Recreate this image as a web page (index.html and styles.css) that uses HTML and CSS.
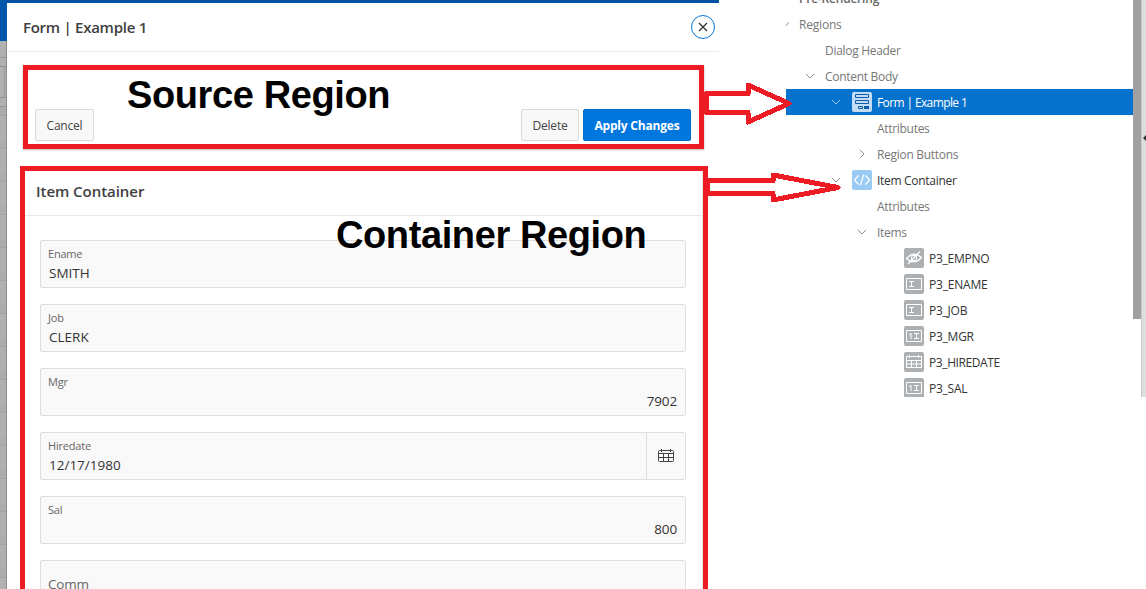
FILE: index.html
```html
<!DOCTYPE html>
<html lang="en">
<head>
<meta charset="utf-8">
<title>Form | Example 1</title>
<link rel="stylesheet" href="styles.css">
</head>
<body>
<svg class="defs" aria-hidden="true">
  <symbol id="down" viewBox="0 0 10 6"><path d="M.8.8 5 5 9.200 .8" fill="none" stroke="currentColor"/></symbol>
  <symbol id="right" viewBox="0 0 6 10"><path d="M.8.8 5 5 .8 9.200" fill="none" stroke="currentColor"/></symbol>
  <symbol id="text" viewBox="0 0 20 20"><path d="M2.500 4.500h15v11h-15zM5 7.500h5M5 12.500h5M7.500 7.500v5" fill="none" stroke="currentColor"/></symbol>
  <symbol id="number" viewBox="0 0 20 20"><path d="M2.500 4.500h15v11h-15zM10 7.500h5M10 12.500h5M12.500 7.500v5M5 8.500l2-1v5.500" fill="none" stroke="currentColor"/></symbol>
  <symbol id="cal" viewBox="0 0 20 20"><path d="M2.500 4.500h15v11h-15zM2.500 8.500h15M2.500 12h15M7.500 8.500v7M12.500 8.500v7M5.500 3v3M14.500 3v3" fill="none" stroke="currentColor"/></symbol>
</svg>
<div class="screen">
  <div class="backdrop"><div class="bar"></div><div class="strip"></div><div class="grid-head"></div><div class="strip"></div><div class="grid-rows"></div></div>
  <main class="dialog">
    <header class="dialog-head">
      <h1>Form | Example 1</h1>
      <button class="close" aria-label="Close"><svg viewBox="0 0 10 10"><path d="M1 1l8 8M9 1L1 9" stroke="#333" stroke-width="1.300"/></svg></button>
    </header>
    <section class="source">
      <button class="btn cancel">Cancel</button>
      <button class="btn delete">Delete</button>
      <button class="btn apply">Apply Changes</button>
    </section>
    <section class="container">
      <h2>Item Container</h2>
      <div class="fields">
        <div class="field"><label>Ename</label><span class="value">SMITH</span></div>
        <div class="field"><label>Job</label><span class="value">CLERK</span></div>
        <div class="field num"><label>Mgr</label><span class="value">7902</span></div>
        <div class="field date"><div class="date-main"><label>Hiredate</label><span class="value">12/17/1980</span></div>
          <button class="picker" aria-label="Calendar"><svg viewBox="0 0 16 14"><path d="M1.500 1.500h13q1 0 1 1v9q0 1-1 1h-13q-1 0-1-1v-9q0-1 1-1zM.5 4.500h15M.5 8.500h15M5.500 4.500v8M10.500 4.500v8M3.500 0v3M12.500 0v3" fill="none" stroke="#444"/></svg></button></div>
        <div class="field num"><label>Sal</label><span class="value">800</span></div>
        <div class="field empty"><label>Comm</label></div>
      </div>
    </section>
  </main>
  <nav class="tree">
    <div class="row l0 strong"><i></i><span>Pre-Rendering</span></div>
    <div class="row l0"><i><svg class="tick" viewBox="0 0 4 5"><path d="M.5 4.500 3.500 .5" stroke="currentColor"/></svg></i><span>Regions</span></div>
    <div class="row l1"><i></i><span class="tight">Dialog Header</span></div>
    <div class="row l1"><i><svg class="down"><use href="#down"/></svg></i><span class="tight">Content Body</span></div>
    <div class="row l2 selected"><i><svg class="down"><use href="#down"/></svg></i><b class="icon form"><svg viewBox="0 0 20 20"><path d="M3.500 2.500h13v3h-13zM3.500 8.500h13v3h-13zM6.500 14.500h4v2h-4z" fill="none" stroke="currentColor"/><path d="M12 14h5v3h-5z" fill="currentColor"/></svg></b><span>Form | Example 1</span></div>
    <div class="row l3"><i></i><span class="tight">Attributes</span></div>
    <div class="row l3"><i><svg class="right"><use href="#right"/></svg></i><span class="tight">Region Buttons</span></div>
    <div class="row l2 dark"><i><svg class="down"><use href="#down"/></svg></i><b class="icon code"><svg viewBox="0 0 20 20"><path d="M6.500 5.500 2.500 10l4 4.500M13.500 5.500l4 4.500-4 4.500M11.800 4.500 8.200 15.500" fill="none" stroke="currentColor" stroke-width="1.200"/></svg></b><span class="tight">Item Container</span></div>
    <div class="row l3"><i></i><span class="tight">Attributes</span></div>
    <div class="row l3"><i><svg class="down"><use href="#down"/></svg></i><span class="tight">Items</span></div>
    <div class="row l4 dark"><b class="icon"><svg viewBox="0 0 20 20"><path d="M2.500 10.500Q9.500 2.500 17.500 9.500Q10 17.500 2.500 10.500zM16 3.500 4 16" fill="none" stroke="currentColor" stroke-width="1.300"/><circle cx="10" cy="10" r="2.700" fill="none" stroke="currentColor"/></svg></b><span>P3_EMPNO</span></div>
    <div class="row l4 dark"><b class="icon"><svg><use href="#text"/></svg></b><span class="wide">P3_ENAME</span></div>
    <div class="row l4 dark"><b class="icon"><svg><use href="#text"/></svg></b><span>P3_JOB</span></div>
    <div class="row l4 dark"><b class="icon"><svg><use href="#number"/></svg></b><span>P3_MGR</span></div>
    <div class="row l4 dark"><b class="icon"><svg><use href="#cal"/></svg></b><span class="hire">P3_HIREDATE</span></div>
    <div class="row l4 dark"><b class="icon"><svg><use href="#number"/></svg></b><span>P3_SAL</span></div>
  </nav>
  <div class="scroll"><div class="thumb"></div></div>
  <div class="splitter"><svg viewBox="0 0 3 6"><path d="M3 0 0 3 3 6z" fill="#333"/></svg></div>
</div>
<strong class="note note-source">Source Region</strong>
<strong class="note note-container">Container Region</strong>
<svg class="arrows" viewBox="0 0 1146 589"><g fill="none" stroke="#ed1c24" stroke-width="5" stroke-linejoin="round" shape-rendering="crispEdges"><path d="M706.500 93.500H748V85L789 103.500 748 122V112.500H706.500z"/><path d="M707.500 180.500H773V175L838 187.500 773 200V193.500H707.500z"/></g></svg>
</body>
</html>
```
FILE: styles.css
```css
* { box-sizing: border-box; }
body { margin: 0; width: 1146px; height: 589px; overflow: hidden; position: relative; background: #fff; font-family: "Open Sans", "Noto Sans", sans-serif; }
button { font: inherit; padding: 0; }
svg { display: block; }
.defs { position: absolute; width: 0; height: 0; }
.screen { display: flex; height: 589px; }
.backdrop { width: 7px; display: flex; flex-direction: column; background: #b0b0b0; border-right: 1px solid #8b8b8b; }
.bar { height: 41px; margin-right: -1px; background: #0056a8; flex: none; }
.strip { height: 17px; border-bottom: 1px solid #969696; flex: none; }
.strip + .grid-head { height: 41px; margin-top: 8px; border-top: 1px solid #8f8f8f; border-bottom: 1px solid #969696; background: linear-gradient(#999, #999) 4px 0 / 1px 31px no-repeat, linear-gradient(#8f8f8f, #8f8f8f) 0 30px / 100% 1px no-repeat; flex: none; }
.grid-head + .strip { height: 0; border: 0; }
.grid-rows { flex: 1; background: repeating-linear-gradient(#acacac 0 8px, #a2a2a2 8px 9px, #b0b0b0 9px 33px) 0 0; }
.dialog { width: 712px; border-top: 3px solid #0054a3; background: #fff; overflow: hidden; display: flex; flex-direction: column; flex: none; }
.dialog-head { height: 49px; flex: none; display: flex; align-items: center; justify-content: space-between; padding: 0 4px 0 16px; border-bottom: 1px solid #ececec; }
h1, h2 { margin: 0; color: #404040; font-weight: 600; font-size: 15px; white-space: nowrap; }
h1 { letter-spacing: -.27px; }
.close { width: 24px; height: 24px; border: 1.500px solid #0076df; border-radius: 50%; background: #fff; display: grid; place-items: center; }
.close svg { width: 10px; height: 10px; }
.source { margin: 13px 15px 0 16px; height: 84px; flex: none; border: 5px solid #ed1c24; box-shadow: 0 1px 2px #bbb; padding: 0 8px 3px 7px; display: flex; align-items: flex-end; gap: 4px; }
.btn { height: 32px; border: 1px solid #d9d9d9; border-radius: 2px; background: #f8f8f8; color: #444; font-size: 12px; letter-spacing: -.2px; padding-top: 1px; white-space: nowrap; }
.cancel { width: 59px; margin-right: auto; }
.delete { width: 58px; }
.apply { width: 108px; background: #0076df; border-color: #006bcb; color: #fff; font-weight: 700; }
.container { margin: 17px 11px 0 13px; height: 440px; flex: none; border: 5px solid #ed1c24; background: linear-gradient(#e6e6e6, #e6e6e6) right / 1px 100% no-repeat; }
h2 { height: 45px; line-height: 40px; padding-left: 11px; letter-spacing: -.05px; border-bottom: 1px solid #e8e8e8; }
.fields { padding: 24px 17px 0 15px; display: grid; gap: 16px; }
.field { height: 48px; border: 1px solid #dedede; border-radius: 2px; background: #f9f9f9; padding: 5px 8px 0 7px; display: flex; flex-direction: column; color: #333; }
label { font-size: 11px; line-height: 15px; color: #666; letter-spacing: -.2px; }
.value { font-size: 13.500px; line-height: 20px; margin-top: 2px; padding-left: 1px; }
.num .value { align-self: flex-end; letter-spacing: -.15px; }
.date { padding: 0; flex-direction: row; }
.date-main { flex: 1; padding: 5px 7px; display: flex; flex-direction: column; }
.picker { width: 39px; border: 0; border-left: 1px solid #dedede; background: #f9f9f9; display: grid; place-items: center; }
.picker svg { width: 16px; height: 14px; }
.empty { padding-top: 13px; }
.empty label { font-size: 13.500px; line-height: 20px; }
.tree { margin-left: 67px; width: 347px; height: 397px; overflow: hidden; flex: none; }
.row { height: 26px; display: flex; align-items: center; color: #777; font-size: 12px; letter-spacing: -.25px; white-space: nowrap; }
.row:first-child { margin-top: -15px; }
.row > i { width: 16px; margin-right: 7px; display: grid; place-items: center; flex: none; color: #8c8c8c; }
.row.l0 { margin-left: -10px; letter-spacing: -.2px; }
.l0 > i { justify-items: end; padding-right: 3px; }
.l1 { padding-left: 16px; }
.l2 { padding-left: 42px; }
.l3 { padding-left: 68px; }
.l4 { padding-left: 118px; }
.row.strong { font-weight: 600; color: #666; }
.dark { color: #333; }
.row.selected { background: #0572ce; color: #fff; letter-spacing: -.62px; font-weight: 500; }
.selected > i { color: #9fc9ee; }
.l2 > i { margin-right: 8px; }
.tight { letter-spacing: -.3px; }
.wide { letter-spacing: -.2px; }
.hire { letter-spacing: -.4px; }
.down { width: 10px; height: 6px; }
.right { width: 6px; height: 10px; }
.tick { width: 4px; height: 5px; }
.icon { width: 20px; height: 20px; margin-right: 5px; border-radius: 2px; background: #acb0b3; color: #fff; flex: none; }
.icon svg { width: 20px; height: 20px; }
.icon.form { background: #c3dcf3; color: #0b5cad; }
.icon.code { background: #9bcbf5; }
.scroll { width: 8px; height: 397px; }
.thumb { height: 319px; background: #a1a1a1; }
.splitter { width: 5px; height: 397px; background: #dedede; border-left: 1px solid #cacaca; padding: 135px 0 0 1px; }
.splitter svg { width: 3px; height: 6px; }
.note { position: absolute; font: bold 38px/44px "Liberation Sans", sans-serif; letter-spacing: -.39px; color: #000; white-space: nowrap; }
.note-source { left: 127px; top: 73px; }
.note-container { left: 336px; top: 213px; }
.arrows { position: absolute; inset: 0; width: 1146px; height: 589px; pointer-events: none; }
```
